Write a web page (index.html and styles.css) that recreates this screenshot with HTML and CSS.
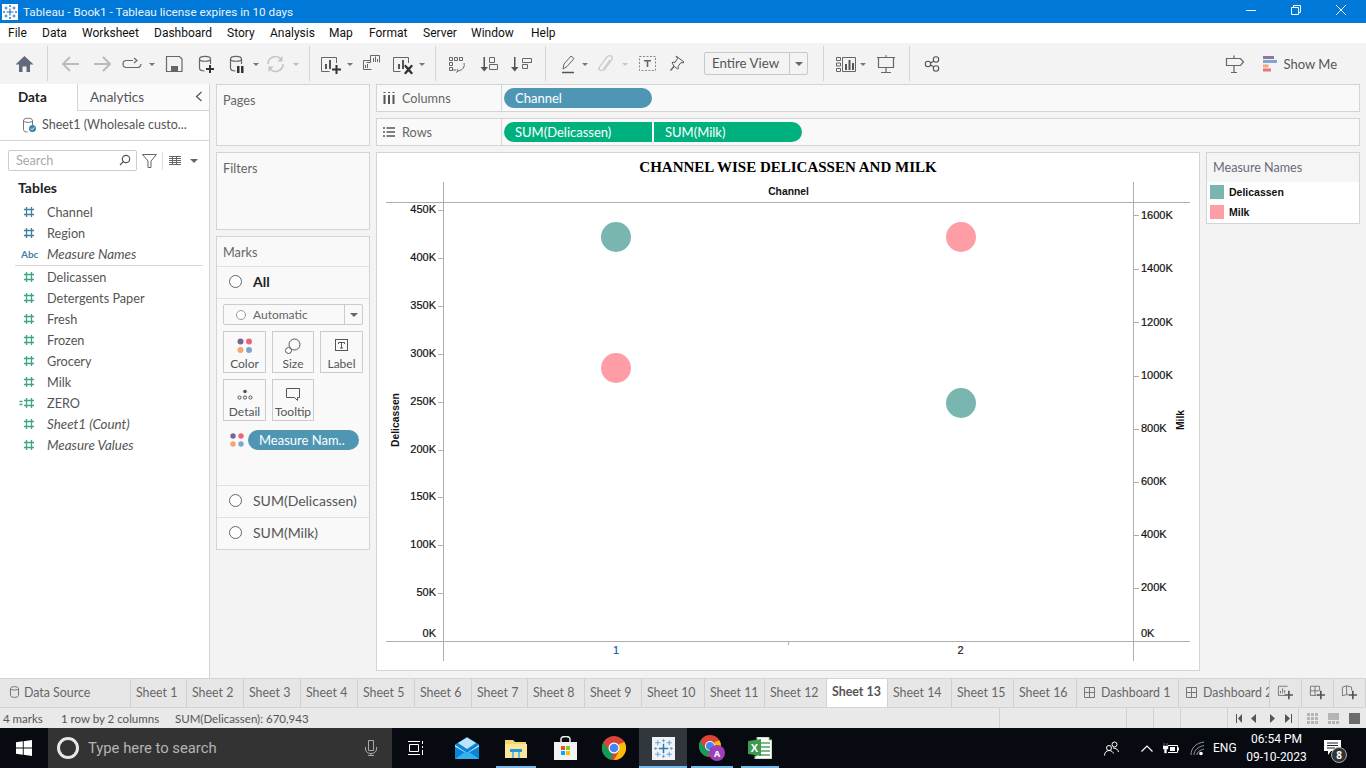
FILE: index.html
```html
<!DOCTYPE html>
<html lang="en">
<head>
<meta charset="utf-8">
<title>Tableau - Book1</title>
<link rel="stylesheet" href="styles.css">
</head>
<body>
<header class="titlebar">
  <svg class="applogo" width="16" height="16" viewBox="0 0 16 16"><rect width="16" height="16" fill="#fff"/><g stroke="#1f6fb5" stroke-width=".9" fill="none"><path d="M8 4.500v7M4.500 8h7" stroke-width="1.100"/><path d="M4 2.500v3M2.500 4h3M12 2.500v3M10.500 4h3M4 10.500v3M2.500 12h3M12 10.500v3M10.500 12h3M8 1v2M7 2h2M8 13v2M7 14h2M2 7v2M1 8h2M14 7v2M13 8h2"/></g></svg>
  <span class="apptitle">Tableau - Book1 - Tableau license expires in 10 days</span>
  <div class="winbtns">
    <svg width="10" height="10" viewBox="0 0 10 10"><path d="M0 5.500h10" stroke="#fff"/></svg>
    <svg width="10" height="10" viewBox="0 0 10 10"><path d="M.5 2.500h7v7h-7zM2.500 2.500v-2h7v7h-2" fill="none" stroke="#fff"/></svg>
    <svg width="10" height="10" viewBox="0 0 10 10"><path d="M0 0l10 10M10 0L0 10" stroke="#fff"/></svg>
  </div>
</header>
<nav class="menubar">
  <span>File</span><span>Data</span><span>Worksheet</span><span>Dashboard</span><span>Story</span><span>Analysis</span><span>Map</span><span>Format</span><span>Server</span><span>Window</span><span>Help</span>
</nav>
<div class="toolbar">
  <svg width="47" height="41" viewBox="0 43 47 41"><path d="M15.500 64.500L24.500 56l9 8.500H30V72h-3.500v-5.500h-4V72H19v-7.500z" fill="#5f6b7a"/></svg>
  <i class="sep"></i>
  <svg width="261" height="41" viewBox="48 43 261 41">
    <g fill="none" stroke="#bbb" stroke-width="2"><path d="M79 64H63M70 57l-7 7 7 7"/><path d="M94 64h16M103 57l7 7-7 7"/></g>
    <g fill="none" stroke="#666" stroke-width="1.200"><path d="M133 60.500h-6.500a3.500 3.500 0 0 0 0 7h11a3.500 3.500 0 0 0 3.500-3.500"/><path d="M134 58l3 2.500-3 2.500"/>
    <path d="M166.500 56.500h13l2.500 2.500v12.500h-15.500z"/>
    <path d="M199.500 59c0-3.500 11-3.500 11 0v5M199.500 59v9c0 2 2 3 5 3M199.500 59c0 3 11 3 11 0"/>
    <path d="M230.500 59c0-3.500 11-3.500 11 0v5M230.500 59v9c0 2 2 3 5 3M230.500 59c0 3 11 3 11 0"/></g>
    <path d="M171 66h7v5.500h-7z" fill="#666"/>
    <path d="M209 65h2v3h3v2h-3v3h-2v-3h-3v-2h3z" fill="#333"/>
    <path d="M237 66h2.500v7H237zM241 66h2.500v7H241z" fill="#333"/>
    <g fill="none" stroke="#c4c4c4" stroke-width="1.600"><path d="M268 64a7.500 7.500 0 0 1 13-5M283 64a7.500 7.500 0 0 1-13 5"/></g>
    <path d="M282.500 56v5.500h-5zM268.500 72v-5.500h5z" fill="#c4c4c4"/>
    <path d="M149 63h6l-3 3zM253 63h6l-3 3z" fill="#777"/><path d="M293 63h6l-3 3z" fill="#bbb"/>
  </svg>
  <i class="sep"></i>
  <svg width="125" height="41" viewBox="310 43 125 41">
    <g fill="none" stroke="#666"><path d="M336.500 63V57.500h-15v14h8"/><path d="M379.500 62.500v-7h-9v7h-4M363.500 60.500h7M363.500 60.500v9h8"/><path d="M408.500 63V57.500h-15v14h7"/></g>
    <path d="M325 64h2v5h-2zM329 60h2v9h-2z" fill="#555"/><path d="M398 64h2v5h-2zM402 60h2v9h-2z" fill="#555"/>
    <path d="M373 58h1v4h-1zM375 56.500h1v5.500h-1zM377 59h1v3h-1zM365 65h1v3h-1zM367 64h1v4h-1z" fill="#666"/>
    <path d="M335.500 65h2v3.500h3.500v2h-3.500V74h-2v-3.500H332v-2h3.500z" fill="#333"/>
    <path d="M404 66l1.500-1.500 3 3 3-3L413 66l-3 3.500 3 3.500-1.500 1.500-3-3-3 3L404 73l3-3.500z" fill="#333"/>
    <path d="M347 63h6l-3 3zM419 63h6l-3 3z" fill="#777"/>
  </svg>
  <i class="sep"></i>
  <svg width="109" height="41" viewBox="436 43 109 41">
    <g fill="none" stroke="#666"><path d="M449.500 57.500h3v3h-3zM454.500 57.500h3v3h-3zM459.500 57.500h3v3h-3zM449.500 62.500h3v3h-3zM449.500 67.500h3v3h-3zM464 63c1 4-1 7-6 8"/><path d="M457 69l1 2-2 1.500M456 70h-4"/>
    <path d="M489.500 57.500h5v5h-5zM489.500 64.500h8v5h-8z"/><path d="M522.500 58.500h9v4h-9zM522.500 64.500h5v4h-5z"/></g>
    <g fill="#555"><path d="M483.500 57h1.500v12h-1.500z"/><path d="M480.500 67h7.500l-3.750 4.500zM514 57h1.500v12H514z"/><path d="M511 67h7.500l-3.750 4.500z"/></g>
  </svg>
  <i class="sep"></i>
  <svg width="158" height="41" viewBox="546 43 158 41">
    <path d="M563 69l1-5 7-8 3 2.500-7 8z" fill="none" stroke="#666"/><path d="M562 72.500h12" stroke="#555" stroke-width="1.500"/><path d="M582 63h6l-3 3z" fill="#777"/>
    <path d="M610 60l-7 9.500c-2 2.500-5 0-3.500-2.500l7.500-10c3-3 7 0 4.500 3l-7.500 10.500" fill="none" stroke="#c6c6c6" stroke-width="1.200"/><path d="M622 63h6l-3 3z" fill="#c6c6c6"/>
    <path d="M639.500 56.500h16v14h-16z" fill="none" stroke="#888" stroke-dasharray="2 1.500"/><path d="M644 60h7v1.500h-2.700V67h-1.600v-5.500H644z" fill="#666"/>
    <path d="M676 56l8 6-1 1-2-.5-3 4 .5 2-1 .5-3-2.500-3.500 4-.5-.5 3.500-4-2-3 1-1 2 .5 2.500-4z" fill="none" stroke="#555"/>
  </svg>
  <div class="fitbox"><span class="fitlabel">Entire View</span><span class="fitarrow"><i class="caret"></i></span></div>
  <i class="sep sep-fit"></i>
  <svg width="85" height="41" viewBox="824 43 85 41">
    <g fill="none" stroke="#666"><path d="M836.500 57.500h4v3h-4zM836.500 63h4v3h-4zM836.500 68.500h4v3h-4zM842.500 57.500h13v14h-13z"/><path d="M877 57.500h18M878.500 57.500v10h15v-10M886 67.500V72M881 72.500h10" stroke-width="1.200"/><path d="M886 55v2.500"/></g>
    <path d="M845 64h2v6h-2zM848.500 60h2v10h-2zM852 63h2v7h-2z" fill="#555"/><path d="M860 63h6l-3 3z" fill="#777"/>
  </svg>
  <i class="sep"></i>
  <svg width="40" height="41" viewBox="910 43 40 41">
    <g fill="none" stroke="#555" stroke-width="1.100"><circle cx="928" cy="64" r="2.700"/><circle cx="936" cy="59.500" r="2.700"/><circle cx="936" cy="68.500" r="2.700"/><path d="M930.500 63l3.500-2M930.500 65l3.500 2"/></g>
  </svg>
  <div class="tb-right">
    <svg width="20" height="20" viewBox="0 0 20 20"><path d="M1.500 4.500h14l3 3.500-3 3.500h-14zM9 1.500v3M9 11.500v7M6 18.500h6" fill="none" stroke="#666" stroke-width="1.200"/></svg>
    <span class="showme"><svg width="15" height="16" viewBox="0 0 15 16"><rect width="11" height="3" fill="#8a78a2"/><rect y="4" width="14" height="3" fill="#80a6cf"/><rect y="8.500" width="5.500" height="3" fill="#f3a873"/><rect y="12.500" width="8" height="3" fill="#f2707c"/></svg>Show Me</span>
  </div>
</div>

<main class="workspace">
  <aside class="datapane">
    <div class="panetabs">
      <span class="ptab active">Data</span>
      <span class="ptab">Analytics<svg class="collapse" width="8" height="11" viewBox="0 0 8 11"><path d="M6.500 1L1.500 5.500l5 4.500" fill="none" stroke="#555" stroke-width="1.200"/></svg></span>
    </div>
    <div class="dsrow">
      <svg width="15" height="16" viewBox="0 0 15 16"><path d="M1.500 3.500c0-3 9-3 9 0v6M1.500 3.500v9c0 2 2 2.500 4 2.500M1.500 3.500c0 2.500 9 2.500 9 0" fill="none" stroke="#777"/><circle cx="10.500" cy="11.500" r="3.500" fill="#3d85a8"/><path d="M8.800 11.500l1.300 1.300 2.200-2.400" fill="none" stroke="#fff"/></svg>
      <span>Sheet1 (Wholesale custo...</span>
    </div>
    <div class="searchrow">
      <div class="searchbox"><span>Search</span><svg width="12" height="12" viewBox="0 0 12 12"><circle cx="7" cy="5" r="3.700" fill="none" stroke="#555" stroke-width="1.200"/><path d="M4.400 7.600L1 11" stroke="#555" stroke-width="1.200"/></svg></div>
      <svg width="15" height="14" viewBox="0 0 15 14"><path d="M.5 .5h14l-5.500 6.500v6.500H6V7z" fill="none" stroke="#666"/></svg>
      <i class="vsep"></i>
      <svg width="12" height="9" viewBox="0 0 12 9"><path d="M0 .5h12M0 2.500h12M0 4.500h12M0 6.500h12M0 8.500h12M3.500 0v9M7.500 0v9" stroke="#666" fill="none"/></svg>
      <i class="caret caret-search"></i>
    </div>
    <h2 class="tables">Tables</h2>
    <ul class="fields">
      <li><svg class="hash blue" viewBox="0 0 10 10"><path d="M2.500 0v10M7.500 0v10M0 2.500h10M0 7.500h10"/></svg>Channel</li>
      <li><svg class="hash blue" viewBox="0 0 10 10"><path d="M2.500 0v10M7.500 0v10M0 2.500h10M0 7.500h10"/></svg>Region</li>
      <li class="ital rule"><b class="abc">Abc</b>Measure Names</li>
      <li><svg class="hash green" viewBox="0 0 10 10"><path d="M2.500 0v10M7.500 0v10M0 2.500h10M0 7.500h10"/></svg>Delicassen</li>
      <li><svg class="hash green" viewBox="0 0 10 10"><path d="M2.500 0v10M7.500 0v10M0 2.500h10M0 7.500h10"/></svg>Detergents Paper</li>
      <li><svg class="hash green" viewBox="0 0 10 10"><path d="M2.500 0v10M7.500 0v10M0 2.500h10M0 7.500h10"/></svg>Fresh</li>
      <li><svg class="hash green" viewBox="0 0 10 10"><path d="M2.500 0v10M7.500 0v10M0 2.500h10M0 7.500h10"/></svg>Frozen</li>
      <li><svg class="hash green" viewBox="0 0 10 10"><path d="M2.500 0v10M7.500 0v10M0 2.500h10M0 7.500h10"/></svg>Grocery</li>
      <li><svg class="hash green" viewBox="0 0 10 10"><path d="M2.500 0v10M7.500 0v10M0 2.500h10M0 7.500h10"/></svg>Milk</li>
      <li><svg class="hash green calc" viewBox="-5 0 15 10"><path d="M2.500 0v10M7.500 0v10M0 2.500h10M0 7.500h10M-4.500 3.500h3M-4.500 6.500h3"/></svg>ZERO</li>
      <li class="ital"><svg class="hash green" viewBox="0 0 10 10"><path d="M2.500 0v10M7.500 0v10M0 2.500h10M0 7.500h10"/></svg>Sheet1 (Count)</li>
      <li class="ital"><svg class="hash green" viewBox="0 0 10 10"><path d="M2.500 0v10M7.500 0v10M0 2.500h10M0 7.500h10"/></svg>Measure Values</li>
    </ul>
  </aside>

  <section class="cardscol">
    <div class="card pages"><h3>Pages</h3></div>
    <div class="card filters"><h3>Filters</h3></div>
    <div class="card marks">
      <h3 class="markshead">Marks</h3>
      <div class="markrow allrow"><i class="ring"></i><b>All</b></div>
      <div class="markbody">
        <div class="marktype"><span class="typename"><i class="ring small"></i>Automatic</span><span class="typearrow"><i class="caret"></i></span></div>
        <div class="markbtns">
          <div class="mbtn"><svg width="16" height="16" viewBox="0 0 16 16"><circle cx="3.500" cy="3.500" r="3" fill="#7b648f"/><circle cx="12" cy="3.500" r="3" fill="#ee6478"/><circle cx="3.500" cy="12" r="3" fill="#f2a66f"/><circle cx="12" cy="12" r="3" fill="#7fa5cf"/></svg><span>Color</span></div>
          <div class="mbtn"><svg width="16" height="16" viewBox="0 0 16 16"><circle cx="9.500" cy="6.500" r="5.500" fill="none" stroke="#555"/><circle cx="3.500" cy="12.500" r="3" fill="#fff" stroke="#555"/></svg><span>Size</span></div>
          <div class="mbtn"><svg width="14" height="14" viewBox="0 0 14 14"><rect x=".5" y="1.500" width="12" height="11" fill="none" stroke="#555"/><path d="M3.500 4.500h6v1.500M6.500 4.500v5.500M5 10h3M3.500 4.500V6" fill="none" stroke="#555"/></svg><span>Label</span></div>
          <div class="mbtn"><svg width="16" height="16" viewBox="0 0 16 16"><circle cx="8" cy="5.500" r="1.800" fill="#555"/><circle cx="2.500" cy="11.500" r="1.600" fill="none" stroke="#555"/><circle cx="8" cy="11.500" r="1.600" fill="none" stroke="#555"/><circle cx="13.500" cy="11.500" r="1.600" fill="none" stroke="#555"/></svg><span>Detail</span></div>
          <div class="mbtn"><svg width="16" height="16" viewBox="0 0 16 16"><path d="M1.500 2.500h13v9h-2v3l-3-3h-8z" fill="none" stroke="#555"/></svg><span>Tooltip</span></div>
        </div>
        <div class="colorpill"><svg width="14" height="14" viewBox="0 0 14 14"><circle cx="3" cy="3" r="2.700" fill="#7b648f"/><circle cx="11" cy="3" r="2.700" fill="#ee6478"/><circle cx="3" cy="11" r="2.700" fill="#f2a66f"/><circle cx="11" cy="11" r="2.700" fill="#7fa5cf"/></svg><span class="pill blue-pill">Measure Nam..</span></div>
      </div>
      <div class="markrow line"><i class="ring"></i><span>SUM(Delicassen)</span></div>
      <div class="markrow line"><i class="ring"></i><span>SUM(Milk)</span></div>
    </div>
  </section>

  <section class="viewcol">
    <div class="shelf">
      <div class="shelflabel"><svg width="12" height="12" viewBox="0 0 12 12"><path d="M1.500 3v9M6 3v9M10.500 3v9" stroke="#555" stroke-width="2"/><path d="M.5 .5h2M5 .5h2M9.500 .5h2" stroke="#555"/></svg>Columns</div>
      <div class="pills"><span class="pill blue-pill wide">Channel</span></div>
    </div>
    <div class="shelf">
      <div class="shelflabel"><svg width="12" height="12" viewBox="0 0 12 12"><path d="M0 2h2M3.500 2H12M0 6h2M3.500 6H12M0 10h2M3.500 10H12" stroke="#555" stroke-width="1.500"/></svg>Rows</div>
      <div class="pills"><span class="pill green-pill wide left">SUM(Delicassen)</span><span class="pill green-pill wide right">SUM(Milk)</span></div>
    </div>
    <div class="viewarea">
      <div class="chartcard">
        <svg class="chart" width="822" height="517" viewBox="377 153 822 517">
          <text class="ctitle" x="788" y="172" text-anchor="middle">CHANNEL WISE DELICASSEN AND MILK</text>
          <text class="chead" x="788.500" y="195" text-anchor="middle">Channel</text>
          <g class="axis">
            <path d="M443.500 182v479M1133.500 182v479M386 202.500h804M386 641.500h804M788.500 642v3"/>
            <path d="M438 210.500h5M438 258.500h5M438 306.500h5M438 354.500h5M438 402.500h5M438 450.500h5M438 497.500h5M438 545.500h5M438 593.500h5"/>
            <path d="M1134 215.500h5M1134 269.500h5M1134 322.500h5M1134 376.500h5M1134 429.500h5M1134 482.500h5M1134 535.500h5M1134 588.500h5"/>
          </g>
          <g class="tick" text-anchor="end">
            <text x="436" y="213">450K</text><text x="436" y="261">400K</text><text x="436" y="309">350K</text><text x="436" y="357">300K</text><text x="436" y="405">250K</text><text x="436" y="453">200K</text><text x="436" y="500">150K</text><text x="436" y="548">100K</text><text x="436" y="596">50K</text><text x="436" y="637">0K</text>
          </g>
          <g class="tick">
            <text x="1141" y="219">1600K</text><text x="1141" y="272">1400K</text><text x="1141" y="326">1200K</text><text x="1141" y="379">1000K</text><text x="1141" y="432">800K</text><text x="1141" y="485">600K</text><text x="1141" y="538">400K</text><text x="1141" y="591">200K</text><text x="1141" y="637">0K</text>
          </g>
          <text class="chead" transform="translate(398.500 420) rotate(-90)" text-anchor="middle">Delicassen</text>
          <text class="chead" transform="translate(1184 420) rotate(-90)" text-anchor="middle">Milk</text>
          <text class="xval blue-val" x="616" y="654" text-anchor="middle">1</text>
          <text class="xval" x="960.500" y="654" text-anchor="middle">2</text>
          <circle cx="616" cy="237" r="15" fill="#79b6b0"/>
          <circle cx="961" cy="237" r="15" fill="#ff9da7"/>
          <circle cx="616" cy="368" r="15" fill="#ff9da7"/>
          <circle cx="961" cy="403" r="15" fill="#79b6b0"/>
        </svg>
      </div>
      <div class="legend">
        <h3>Measure Names</h3>
        <ul>
          <li><i class="swatch teal"></i>Delicassen</li>
          <li><i class="swatch pink"></i>Milk</li>
        </ul>
      </div>
    </div>
  </section>
</main>

<div class="tabs">
  <span class="tab ds"><svg width="9" height="12" viewBox="0 0 9 12"><path d="M.5 2.500c0-2.500 8-2.500 8 0v7c0 2.500-8 2.500-8 0zM.5 2.500c0 2 8 2 8 0" fill="none" stroke="#777"/></svg>Data Source</span>
  <span class="tab">Sheet 1</span><span class="tab">Sheet 2</span><span class="tab">Sheet 3</span><span class="tab">Sheet 4</span><span class="tab">Sheet 5</span><span class="tab">Sheet 6</span><span class="tab">Sheet 7</span><span class="tab">Sheet 8</span><span class="tab">Sheet 9</span><span class="tab">Sheet 10</span><span class="tab">Sheet 11</span><span class="tab">Sheet 12</span>
  <span class="tab current">Sheet 13</span>
  <span class="tab">Sheet 14</span><span class="tab">Sheet 15</span><span class="tab">Sheet 16</span>
  <span class="tab dash"><svg width="11" height="11" viewBox="0 0 11 11"><path d="M.5 .5h10v10H.5zM.5 5.500h10M5.500 .5v10" fill="none" stroke="#777"/></svg>Dashboard 1</span>
  <span class="tab dash"><svg width="11" height="11" viewBox="0 0 11 11"><path d="M.5 .5h10v10H.5zM.5 5.500h10M5.500 .5v10" fill="none" stroke="#777"/></svg>Dashboard 2</span>
  <span class="tab ico"><svg width="17" height="15" viewBox="0 0 20 18"><path d="M12.500 1.500h-11v11h8" fill="none" stroke="#666"/><path d="M4 7v3M6.500 4v6M9 6v4" stroke="#666"/><path d="M13 7h2v4h4v2h-4v4h-2v-4H9v-2h4z" fill="#555"/></svg></span>
  <span class="tab ico"><svg width="17" height="15" viewBox="0 0 20 18"><path d="M1.500 1.500h11v5M1.500 1.500v11h7M1.500 7h11M7 1.500v11" fill="none" stroke="#666"/><path d="M13 7h2v4h4v2h-4v4h-2v-4H9v-2h4z" fill="#555"/></svg></span>
  <span class="tab ico"><svg width="17" height="15" viewBox="0 0 20 18"><path d="M1.500 2.500l5-1.500 6 1.500v4M1.500 2.500v10.500l5-1.500 2 .5M6.500 1v10.500" fill="none" stroke="#666"/><path d="M13 7h2v4h4v2h-4v4h-2v-4H9v-2h4z" fill="#555"/></svg></span>
</div>
<footer class="statusbar">
  <div class="statustext"><span>4 marks</span><span>1 row by 2 columns</span><span>SUM(Delicassen): 670,943</span></div>
  <i class="scell c1"></i><i class="scell c2"></i><i class="scell c3"></i><i class="scell c4"></i>
  <div class="scell nav">
    <svg width="56" height="9" viewBox="0 0 56 9"><path d="M0 0h1v9H0zM6 0v9L2 4.500zM20 0v9l-5-4.500zM34 0v9l5-4.500zM49 0v9l5-4.500zM55 0h1v9h-1z" fill="#555"/></svg>
  </div>
  <div class="scell views">
    <svg width="53" height="11" viewBox="0 0 53 11"><path d="M0 0h3v3H0zM4 0h3v3H4zM8 0h3v3H8zM0 4h3v3H0zM4 4h3v3H4zM8 4h3v3H8zM0 8h3v3H0zM4 8h3v3H4zM8 8h3v3H8z" fill="#b5b5b5"/><path d="M21 0h11v7H21zM21 8h3v3h-3zM25 8h3v3h-3zM29 8h3v3h-3z" fill="#b5b5b5"/><rect x="42" width="11" height="11" fill="#6b6b6b"/></svg>
  </div>
</footer>
<div class="taskbar">
  <div class="start"><svg width="16" height="16" viewBox="0 0 16 16"><path d="M0 2.300l6.800-1V7.500H0zM7.700 1.200L16 0v7.500H7.700zM0 8.400h6.800v6.300l-6.800-1zM7.700 8.400H16V16l-8.300-1.200z" fill="#fff"/></svg></div>
  <div class="searchbar">
    <i class="cortana"></i>
    <span>Type here to search</span>
    <svg width="12" height="16" viewBox="0 0 12 16"><path d="M3.500 .5h5v10h-5zM.5 7v2c0 3 2.500 4.500 5.500 4.500s5.500-1.500 5.500-4.500V7M6 13.500V16M3 15.500h6" fill="none" stroke="#aaa"/></svg>
  </div>
  <div class="taskicons">
    <span class="ticon"><svg width="16" height="14" viewBox="0 0 16 14"><path d="M0 .5h12M0 13.500h12M1.500 3.500h9v7h-9zM14.500 0v3M14.500 5v2M14.500 9v5" fill="none" stroke="#fff"/></svg></span>
    <span class="ticon"><svg width="24" height="22" viewBox="0 0 24 22"><path d="M12 0l12 7.500V22H0V7.500z" fill="#0a84d6"/><path d="M3 6l9-5.500L21 6l-9 6z" fill="#bde3fb"/><path d="M0 8l12 8 12-8v1.500l-12 7-12-7z" fill="#d6effd"/><path d="M0 22l10-7 2 1.500 2-1.500 10 7z" fill="#35b1f0"/></svg></span>
    <span class="ticon on"><svg width="22" height="19" viewBox="0 0 22 19"><path d="M0 1h8l2 2h11v16H0z" fill="#f6d565"/><rect y="5" width="22" height="14" fill="#fbe69a"/><path d="M5 10h12v3H5z" fill="#2c96d8"/><path d="M7 13h2v6H7zM13 13h2v6h-2z" fill="#5fc0f0"/><path d="M9 15h4v4H9z" fill="#fbe69a"/></svg></span>
    <span class="ticon"><svg width="23" height="24" viewBox="0 0 23 24"><path d="M7 6V3c0-3.500 9-3.500 9 0v3" fill="none" stroke="#eee" stroke-width="1.500"/><rect y="6" width="23" height="18" fill="#f3f3f3"/><rect x="7" y="10" width="4" height="4" fill="#f1511b"/><rect x="12" y="10" width="4" height="4" fill="#80cc28"/><rect x="7" y="15" width="4" height="4" fill="#00adef"/><rect x="12" y="15" width="4" height="4" fill="#fbbc09"/></svg></span>
    <span class="ticon"><svg width="24" height="24" viewBox="0 0 24 24"><circle cx="12" cy="12" r="12" fill="#db4437"/><path d="M12 24A12 12 0 0 1 1.600 6L7 15l5 1-3 8z" fill="#0f9d58"/><path d="M22.400 6A12 12 0 0 1 12 24l5-9V8z" fill="#fbbc05"/><circle cx="12" cy="12" r="5.500" fill="#fff"/><circle cx="12" cy="12" r="4.300" fill="#4285f4"/></svg></span>
    <span class="ticon active"><svg width="23" height="23" viewBox="0 0 22 22"><rect width="22" height="22" fill="#eef3f7"/><g fill="none" stroke="#6ea5cf"><path d="M5.500 3v5M3 5.500h5M16.500 3v5M14 5.500h5M5.500 14v5M3 16.500h5M16.500 14v5M14 16.500h5M11 2v3M9.500 3.500h3M11 17v3M9.500 18.500h3M3.500 9.500v3M2 11h3M18.500 9.500v3M17 11h3"/><path d="M11 6.500v9M6.500 11h9" stroke="#2a78b5" stroke-width="1.400"/></g></svg></span>
    <span class="ticon on2"><svg width="26" height="26" viewBox="0 0 26 26"><circle cx="11" cy="11" r="11" fill="#db4437"/><path d="M11 22A11 11 0 0 1 1.500 5.500L6 14l5 1-3 7z" fill="#0f9d58"/><path d="M20.500 5.500A11 11 0 0 1 11 22l4.500-8V7z" fill="#fbbc05"/><circle cx="11" cy="11" r="5" fill="#fff"/><circle cx="11" cy="11" r="4" fill="#4285f4"/><circle cx="18" cy="18" r="8" fill="#9c3fb8"/><text x="18" y="21.500" class="badgea" text-anchor="middle">A</text></svg></span>
    <span class="ticon on3"><svg width="24" height="22" viewBox="0 0 24 22"><path d="M9 0h12v3h3v19H7v-3H9z" fill="#fff" stroke="#9bc19b"/><path d="M11 5h11v2H11zM11 9h11v2H11zM11 13h11v2H11zM11 17h11v2H11z" fill="#7fb88a"/><path d="M0 4l13-2v17L0 17z" fill="#3e9a52"/><text x="6.500" y="15" class="xls" text-anchor="middle">X</text></svg></span>
  </div>
  <div class="tray">
    <svg class="tr-people" width="15" height="15" viewBox="0 0 15 15"><g fill="none" stroke="#fff"><circle cx="5" cy="7" r="2.500"/><circle cx="10.500" cy="3.500" r="2.500"/><path d="M.5 14.500c0-3 2-5 4.500-5s4 1.500 4.500 3M9 7c3 0 5 1.500 5.500 4"/></g></svg>
    <svg class="tr-chev" width="12" height="7" viewBox="0 0 12 7"><path d="M.5 6.500L6 1l5.500 5.500" fill="none" stroke="#fff" stroke-width="1.200"/></svg>
    <svg class="tr-bat" width="16" height="11" viewBox="0 0 16 11"><path d="M5 2.500h9.500v7H5" fill="none" stroke="#fff"/><path d="M15 4.500h1v3h-1zM7 4h5v4H7z" fill="#fff"/><path d="M1 0v3M4 0v3M0 3h5v3H3.500v4h-2V6H0z" fill="#fff" stroke="#fff" stroke-width=".4"/></svg>
    <svg class="tr-wifi" width="15" height="15" viewBox="0 0 15 15"><g fill="none" stroke="#999"><path d="M1 14C1 7 6 2 14 1"/><path d="M4 14c0-5 4-8 10-9.500"/><path d="M7 14c0-3 3-5 7-6"/></g><circle cx="11" cy="12.500" r="1.800" fill="#fff"/></svg>
    <span class="lang">ENG</span>
    <div class="clock"><span>06:54 PM</span><span>09-10-2023</span></div>
    <span class="notif"><svg width="17" height="15" viewBox="0 0 17 15"><path d="M0 0h17v11H7l-3 4v-4H0z" fill="#fff"/><path d="M3 3h11M3 5.500h11M3 8h8" stroke="#222"/></svg><b class="notifnum">8</b></span>
  </div>
</div>
</body>
</html>
```
FILE: styles.css
```css
* { box-sizing: border-box; }
html, body { margin: 0; padding: 0; }
body { width: 1366px; height: 768px; overflow: hidden; background: #f3f3f3; font-family: Lato, "Open Sans", sans-serif; color: #555; }
h2, h3, ul { margin: 0; padding: 0; font-weight: normal; list-style: none; }
i { font-style: normal; display: block; }
svg { display: block; flex: none; }

.titlebar { height: 23px; background: #0078d7; color: #fff; display: flex; align-items: center; padding-left: 2px; font: 11.750px Roboto, sans-serif; }
.apptitle { margin-left: 5px; color: #e8f3fc; }
.winbtns { margin-left: auto; display: flex; gap: 35px; padding-right: 20px; margin-top: -4px; }

.menubar { height: 20px; background: #fff; color: #111; display: grid; grid-template-columns: 34px 40px 72px 73px 43px 59px 40px 54px 48px 60px 40px; padding-left: 8px; align-items: center; font: 12px Roboto, sans-serif; }

.toolbar { height: 41px; background: #f3f3f3; display: flex; align-items: center; }
.sep { width: 1px; height: 35px; background: #d4d4d4; flex: none; }
.sep-fit { margin-left: 15px; }
.fitbox { width: 104px; height: 23px; border: 1px solid #c8c8c8; border-radius: 2px; display: flex; font-size: 13.300px; color: #555; }
.fitlabel { flex: 1; padding-left: 7px; line-height: 20px; }
.fitarrow { width: 18px; border-left: 1px solid #c8c8c8; display: flex; align-items: center; justify-content: center; }
.caret { width: 0; height: 0; border-left: 4px solid transparent; border-right: 4px solid transparent; border-top: 4px solid #666; }
.tb-right { margin-left: auto; display: flex; align-items: center; gap: 18px; padding-right: 29px; }
.showme { display: flex; align-items: center; gap: 6px; font-size: 13px; color: #555; }

.workspace { height: 594px; display: grid; grid-template-columns: 210px 154px 1fr; column-gap: 6px; padding-right: 6px; }
.datapane { background: #fff; border-right: 1px solid #d4d4d4; width: 210px; }
.panetabs { height: 27px; display: grid; grid-template-columns: 77px 1fr; }
.ptab { display: flex; align-items: center; font-size: 13.500px; color: #555; background: #fbfbfb; border-left: 1px solid #d4d4d4; border-bottom: 1px solid #d4d4d4; padding: 0 0 0 12px; position: relative; }
.ptab.active { background: #fff; border: 0; color: #222; font-weight: 700; padding: 0 0 2px 18px; }
.collapse { position: absolute; right: 6px; top: 7px; }
.dsrow { height: 30px; border-bottom: 1px solid #d4d4d4; display: flex; align-items: center; padding: 0 0 2px 22px; gap: 5px; font-size: 12.500px; color: #555; }
.searchrow { display: flex; align-items: center; margin: 9px 0 0 8px; height: 21px; }
.searchbox { width: 129px; height: 21px; border: 1px solid #ccc; border-radius: 2px; display: flex; align-items: center; justify-content: space-between; padding: 0 5px 1px 7px; font-size: 12.700px; color: #aaa; }
.searchrow > svg:nth-of-type(1) { margin-left: 5px; }
.vsep { width: 1px; height: 18px; background: #ddd; margin: 0 6px 0 5px; }
.caret-search { margin-left: 9px; }
.tables { font-size: 14px; font-weight: 700; color: #222; height: 22px; line-height: 22px; margin: 6px 0 2px 18px; }
.fields li { height: 21px; display: flex; align-items: center; padding-left: 47px; font-size: 12.700px; color: #555; position: relative; }
.fields li.ital { font-style: italic; font-size: 13.400px; }
.fields li.rule { height: 23px; padding-bottom: 2px; }
.fields li.rule::after { content: ""; position: absolute; left: 15px; right: 6px; bottom: 0; height: 1px; background: #d8d8d8; }
.hash { position: absolute; left: 24px; top: 6px; width: 10px; height: 10px; fill: none; stroke-width: 1.300; }
.hash.blue { stroke: #3f7f9f; }
.hash.green { stroke: #3fa583; }
.hash.calc { left: 19px; width: 15px; }
.abc { position: absolute; left: 21px; top: 5px; font-size: 10px; font-style: normal; font-weight: 700; color: #4c7ea0; }

.cardscol { display: flex; flex-direction: column; gap: 6px; }
.card { border: 1px solid #d4d4d4; background: #f9f9f9; }
.card h3 { font-size: 12.700px; color: #666; padding: 7px 6px 0; }
.pages { height: 62px; }
.filters { height: 78px; }
.marks { height: 314px; }
.card h3.markshead { height: 30px; border-bottom: 1px solid #e0e0e0; padding-top: 7px; }
.markrow { display: flex; align-items: center; padding: 0 0 2px 12px; gap: 11px; font-size: 14px; color: #555; }
.allrow { height: 32px; border-bottom: 1px solid #e0e0e0; }
.allrow b { color: #222; }
.line { height: 32px; border-top: 1px solid #e0e0e0; }
.ring { width: 13px; height: 13px; border: 1.500px solid #666; border-radius: 50%; background: #fff; flex: none; }
.ring.small { width: 10px; height: 10px; border: 1px solid #999; }
.markbody { height: 186px; padding: 5px 6px 0; }
.marktype { width: 140px; height: 21px; border: 1px solid #ccc; border-radius: 2px; display: flex; font-size: 12px; color: #666; }
.typename { flex: 1; display: flex; align-items: center; gap: 7px; padding-left: 12px; }
.typearrow { width: 18px; border-left: 1px solid #ccc; display: flex; align-items: center; justify-content: center; }
.markbtns { display: grid; grid-template-columns: 43px 42px 43px; column-gap: 6px; row-gap: 6px; margin-top: 6px; }
.mbtn { height: 42px; border: 1px solid #ccc; display: flex; flex-direction: column; align-items: center; justify-content: space-between; padding: 6px 0 1px; font-size: 12px; color: #555; }
.colorpill { display: flex; align-items: center; gap: 4px; margin: 9px 0 0 7px; }
.pill { display: flex; align-items: center; height: 20px; color: #fff; font-size: 13px; border-radius: 10px; padding: 0 0 1px 11px; }
.blue-pill { background: #4e96b4; }
.green-pill { background: #00b180; }
.colorpill .pill { width: 111px; }

.viewcol { display: flex; flex-direction: column; min-width: 0; }
.shelf { height: 28px; border: 1px solid #d4d4d4; background: #f9f9f9; display: flex; margin-bottom: 6px; }
.shelflabel { width: 125px; border-right: 1px solid #d4d4d4; display: flex; align-items: center; gap: 7px; padding: 0 0 1px 6px; font-size: 12.700px; color: #666; }
.pills { display: flex; gap: 2px; padding: 3px 0 0 2px; }
.wide { width: 148px; }
.left { border-radius: 10px 0 0 10px; }
.right { border-radius: 0 10px 10px 0; }
.viewarea { display: flex; gap: 6px; align-items: flex-start; }
.chartcard { width: 824px; height: 519px; background: #fff; border: 1px solid #d4d4d4; }
.ctitle { font: bold 15px "Liberation Serif", serif; fill: #000; }
.chead { font: bold 10.300px "Liberation Sans", sans-serif; fill: #111; }
.axis { stroke: #aeaeae; fill: none; }
.tick { font: 11px "Liberation Sans", sans-serif; fill: #111; stroke: #111; stroke-width: .2px; }
.xval { font: 11px "Liberation Sans", sans-serif; fill: #222; stroke: #222; stroke-width: .2px; }
.xval.blue-val { fill: #1a5f96; stroke: #1a5f96; }
.legend { width: 154px; height: 72px; border: 1px solid #d4d4d4; background: #fff; }
.legend h3 { height: 29px; background: #f5f5f5; font-size: 12.600px; color: #6a6a7a; padding: 7px 6px 0; }
.legend li { height: 20px; display: flex; align-items: center; gap: 5px; padding-left: 3px; font: bold 10.500px "Liberation Sans", sans-serif; color: #111; }
.swatch { width: 14px; height: 14px; }
.teal { background: #79b6b0; }
.pink { background: #ff9da7; }

.tabs { height: 30px; background: #e6e6e6; border-top: 1px solid #d4d4d4; border-bottom: 1px solid #d4d4d4; display: grid; grid-template-columns: 131px 56px 57px 57px 57px 57px 57px 56px 57px 57px 63px 60px 62px 61px 64px 62px 63px 102px 91px 32px 32px 32px; font-size: 12.400px; color: #666; }
.tab { display: flex; align-items: center; justify-content: flex-start; border-right: 1px solid #d0d0d0; white-space: nowrap; overflow: hidden; gap: 6px; padding: 0 0 2px 5px; min-width: 0; }
.tab.ds { padding-left: 10px; color: #666; gap: 5px; }
.tab.dash { padding-left: 7px; }
.tab.ico { justify-content: center; padding-left: 0; }
.tab.current { background: #fff; font-weight: 700; color: #555; padding-bottom: 3px; }

.statusbar { height: 20px; background: #e9e9e9; display: flex; font-size: 11.500px; color: #555; }
.statustext { display: grid; grid-template-columns: 58px 114px auto; padding-left: 3px; align-items: center; width: 999px; flex: none; }
.scell { border-left: 1px solid #d0d0d0; flex: none; }
.c1 { width: 127px; }
.c2 { width: 27px; }
.c3 { width: 27px; }
.c4 { width: 47px; }
.nav { width: 71px; display: flex; align-items: center; padding-left: 8px; }
.views { flex: 1; display: flex; align-items: center; padding-left: 8px; }

.taskbar { height: 40px; background: #070a10; display: flex; align-items: center; color: #fff; }
.start { width: 48px; height: 40px; display: flex; align-items: center; justify-content: center; }
.searchbar { width: 344px; height: 40px; background: #333; display: flex; align-items: center; padding: 0 15px 0 9px; font: 14.800px Roboto, sans-serif; color: #b5b5b5; }
.cortana { width: 22px; height: 22px; border: 3px solid #e8e8e8; border-radius: 50%; flex: none; }
.searchbar span { flex: 1; margin-left: 9px; }
.taskicons { display: grid; grid-template-columns: 48px 54px 44px 54px 44px 51px 50px 46px; height: 40px; }
.ticon { display: flex; align-items: center; justify-content: center; height: 40px; position: relative; }
.ticon.on::after, .ticon.on2::after, .ticon.on3::after, .ticon.active::after { content: ""; position: absolute; left: 4px; right: 4px; bottom: 0; height: 2px; background: #76b9ed; }
.ticon.on::after { left: 2px; right: 2px; }
.ticon.active { background: #32373d; margin-left: 3px; }
.ticon.active::after { left: 0; right: 0; }
.tray { margin-left: auto; display: flex; align-items: center; height: 40px; position: relative; width: 266px; }
.tr-people { margin-left: 4px; }
.tr-chev { margin-left: 22px; }
.tr-bat { margin-left: 10px; }
.tr-wifi { margin-left: 11px; }
.lang { font: 12px Roboto, sans-serif; margin-left: 8px; }
.clock { display: flex; flex-direction: column; align-items: center; font: 12px/18px Roboto, sans-serif; margin-left: 7px; width: 66px; }
.notif { position: absolute; right: 25px; top: 12px; }
.notifnum { position: absolute; left: 7px; top: 7px; width: 16px; height: 16px; border-radius: 50%; background: #333; border: 1px solid #aaa; font: bold 10px/14px "Open Sans", sans-serif; text-align: center; color: #fff; }
.badgea { font: bold 9px "Open Sans", sans-serif; fill: #fff; }
.xls { font: bold 11px "Liberation Sans", sans-serif; fill: #fff; }
```
